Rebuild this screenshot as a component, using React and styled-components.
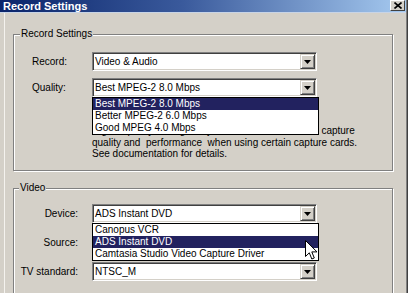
import React from 'react'
import styled, { createGlobalStyle } from 'styled-components'

const GlobalStyle = createGlobalStyle`
    html, body {
        margin: 0;
        padding: 0;
        background: #d4d0c8;
        overflow: hidden;
    }
    body {
        font-family: "Liberation Sans", Arial, sans-serif;
        font-size: 10px;
        color: #000;
    }
`
const Window = styled.div`
    width: 408px;
    height: 293px;
    box-sizing: border-box;
    background: #d4d0c8;
    border-right: 1px solid #404040;
    box-shadow: inset -1px 0 0 #808080, inset 4px 0 0 #d4d0c8, inset 5px 0 0 #f4f2ee;
    overflow: hidden;
`
const TitleBar = styled.div`
    height: 12px;
    margin-right: 1px;
    padding: 0 1px 0 3px;
    display: flex;
    align-items: flex-start;
    justify-content: space-between;
    background: linear-gradient(to right, #0a246a 0%, #3a5a9c 45%, #a6caf0 100%);
    border-bottom: 1px solid #c8d4e6;
`
const Title = styled.span`
    color: #fff;
    font-weight: bold;
    font-size: 11px;
    line-height: 12px;
`
const CloseButton = styled.div`
    width: 15px;
    height: 11px;
    box-sizing: border-box;
    display: flex;
    align-items: center;
    justify-content: center;
    background: #d4d0c8;
    border: 1px solid;
    border-color: #fff #404040 #404040 #fff;
`
const Body = styled.div`
    padding: 21px 0 0 13px;
    display: flex;
    flex-direction: column;
    gap: 17px;
`
const Group = styled.div`
    position: relative;
    width: 380px;
    height: ${p => p.$height}px;
    box-sizing: border-box;
    border: 1px solid #808080;
    box-shadow: 1px 1px 0 #fff, inset 1px 1px 0 #fff;
    padding-top: ${p => p.$padTop}px;
`
const Legend = styled.span`
    position: absolute;
    top: -7px;
    left: ${p => p.$left}px;
    padding: 0 1px;
    line-height: 12px;
    background: #d4d0c8;
`
const FieldGrid = styled.div`
    display: grid;
    grid-template-columns: ${p => p.$labelCol}px 225px;
    column-gap: ${p => p.$colGap}px;
    row-gap: ${p => p.$rowGap}px;
    padding-left: ${p => p.$padLeft}px;
    align-items: center;
`
const Label = styled.span`
    text-align: ${p => p.$align};
    white-space: nowrap;
`
const ComboWrap = styled.div`
    position: relative;
`
const Combo = styled.div`
    height: 19px;
    box-sizing: border-box;
    display: flex;
    align-items: center;
    padding: 1px;
    background: #fff;
    border: 1px solid;
    border-color: #808080 #fff #fff #808080;
    box-shadow: inset 1px 1px 0 #404040, inset -1px -1px 0 #d4d0c8;
`
const ComboText = styled.span`
    flex: 1;
    padding-left: 1px;
    white-space: nowrap;
`
const ArrowButton = styled.div`
    width: 15px;
    height: 15px;
    box-sizing: border-box;
    display: flex;
    align-items: center;
    justify-content: center;
    background: #d4d0c8;
    border: 1px solid;
    border-color: #d4d0c8 #404040 #404040 #d4d0c8;
    box-shadow: inset 1px 1px 0 #fff, inset -1px -1px 0 #808080;
`
const DropList = styled.div`
    position: absolute;
    top: 100%;
    left: 0;
    width: 227px;
    box-sizing: border-box;
    background: #fff;
    border: 1px solid #000;
    z-index: 2;
`
const DropItem = styled.div`
    height: 12px;
    line-height: 12px;
    padding-left: 2px;
    white-space: nowrap;
    background: ${p => (p.$selected ? '#22225f' : 'transparent')};
    color: ${p => (p.$selected ? '#fff' : '#000')};
`
const Note = styled.div`
    grid-column: 2;
    margin-top: 21px;
    line-height: 11.5px;
    white-space: pre;
`
const Cursor = styled.svg`
    position: absolute;
    left: 212px;
    top: 16px;
`

const Dropdown = ({ value, items, selected, children }) => (
    <ComboWrap>
        <Combo>
            <ComboText>{value}</ComboText>
            <ArrowButton>
                <svg width="7" height="4" viewBox="0 0 7 4"><polygon points="0,0 7,0 3.5,4" fill="#000" /></svg>
            </ArrowButton>
        </Combo>
        {items &&
            <DropList>
                {items.map(item => (
                    <DropItem key={item} $selected={item === selected}>{item}</DropItem>
                ))}
                {children}
            </DropList>
        }
    </ComboWrap>
)

const App = () => {
    return (
        <Window>
            <GlobalStyle />
            <TitleBar>
                <Title>Record Settings</Title>
                <CloseButton>
                    <svg width="8" height="7" viewBox="0 0 8 7">
                        <path d="M0.5 0.5 L7.5 6.5 M7.5 0.5 L0.5 6.5" stroke="#000" strokeWidth="1.6" />
                    </svg>
                </CloseButton>
            </TitleBar>
            <Body>
                <Group $height={137} $padTop={17}>
                    <Legend $left={6}>Record Settings</Legend>
                    <FieldGrid $labelCol={60} $colGap={0} $rowGap={7} $padLeft={18}>
                        <Label $align="left">Record:</Label>
                        <Dropdown value="Video & Audio" />
                        <Label $align="left">Quality:</Label>
                        <Dropdown
                            value="Best MPEG-2 8.0 Mbps"
                            items={['Best MPEG-2 8.0 Mbps', 'Better MPEG-2 6.0 Mbps', 'Good MPEG 4.0 Mbps']}
                            selected="Best MPEG-2 8.0 Mbps"
                        />
                        <Note>{'Higher quality settings may affect the rates of video capture\nquality and  performance  when using certain capture cards.\nSee documentation for details.'}</Note>
                    </FieldGrid>
                </Group>
                <Group $height={140} $padTop={15}>
                    <Legend $left={5}>Video</Legend>
                    <FieldGrid $labelCol={64} $colGap={14} $rowGap={10} $padLeft={0}>
                        <Label $align="right">Device:</Label>
                        <Dropdown
                            value="ADS Instant DVD"
                            items={['Canopus VCR', 'ADS Instant DVD', 'Camtasia Studio Video Capture Driver']}
                            selected="ADS Instant DVD"
                        >
                            <Cursor width="13" height="21" viewBox="0 0 13 21">
                                <path d="M0.5 0.5 L0.5 16.5 L4.3 12.8 L6.8 19 L9.3 18 L6.8 11.9 L12 11.9 Z" fill="#fff" stroke="#000" strokeWidth="1" strokeLinejoin="miter" />
                            </Cursor>
                        </Dropdown>
                        <Label $align="right">Source:</Label>
                        <Dropdown value="" />
                        <Label $align="right">TV standard:</Label>
                        <Dropdown value="NTSC_M" />
                    </FieldGrid>
                </Group>
            </Body>
        </Window>
    )
}

export default App
